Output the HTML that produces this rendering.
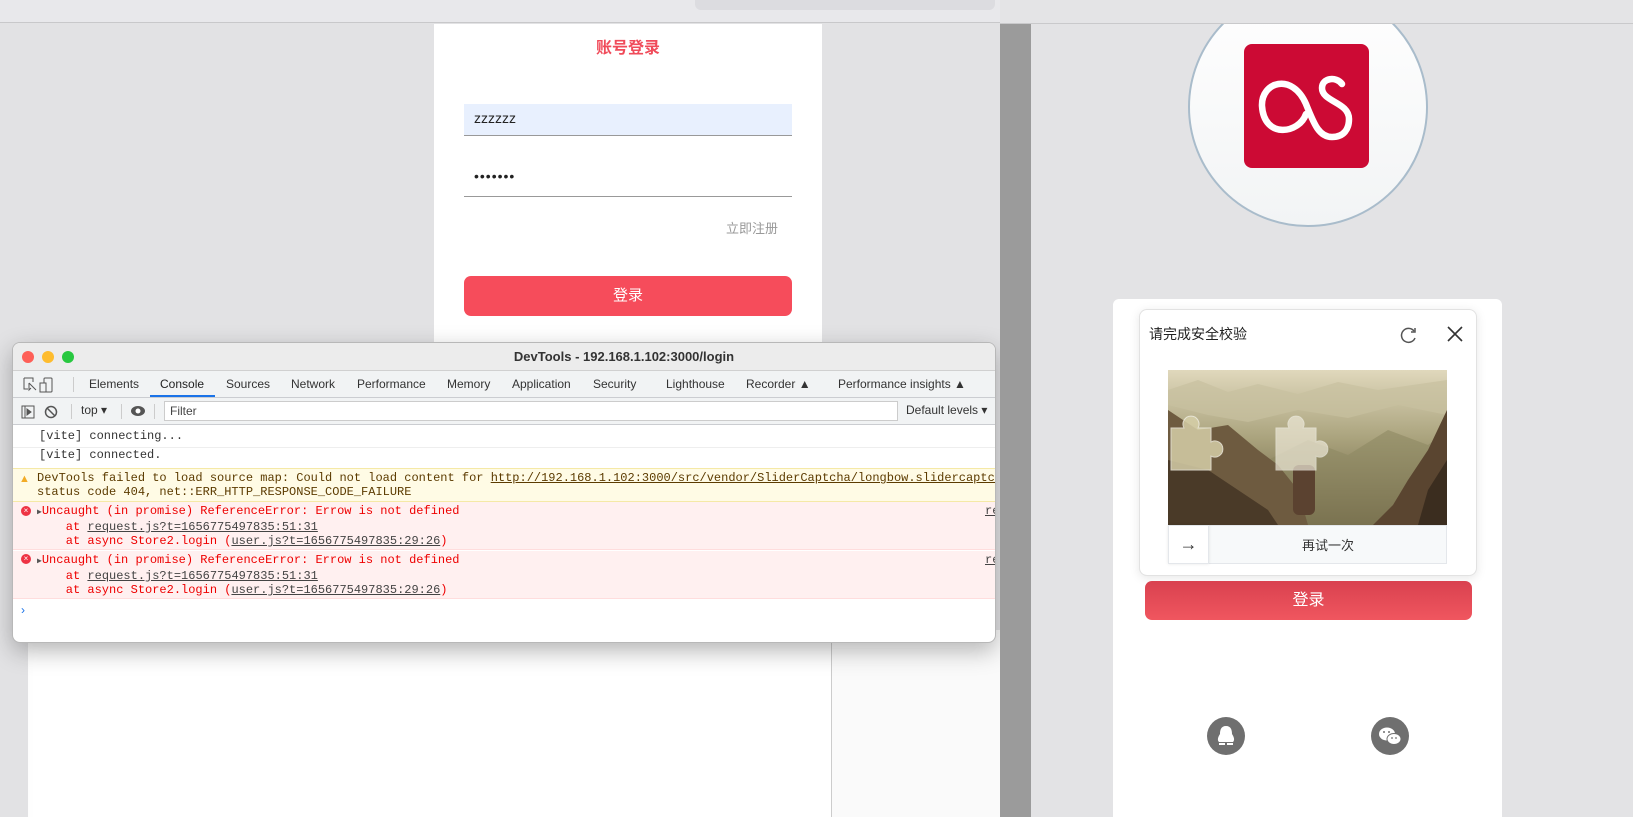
<!DOCTYPE html>
<html><head><meta charset="utf-8">
<style>
*{margin:0;padding:0;box-sizing:border-box}
body{width:1633px;height:817px;overflow:hidden;position:relative;background:#e3e3e5;font-family:"Liberation Sans","Noto Sans CJK SC",sans-serif}
.a{position:absolute}
.mono{font-family:"Liberation Mono","DejaVu Sans Mono",monospace;font-size:12px;white-space:pre}
.u{text-decoration:underline}
</style></head><body>
<!-- left app -->
<div class="a" style="left:0;top:0;width:1000px;height:817px;background:#e2e2e4"></div>
<div class="a" style="left:0;top:0;width:1000px;height:23px;background:#e8e8eb;border-bottom:1px solid #c8c8ca"></div>
<div class="a" style="left:695px;top:0;width:300px;height:10px;background:#dcdce0;border-radius:0 0 6px 6px"></div>
<div class="a" style="left:434px;top:24px;width:388px;height:320px;background:#fff"></div>
<div class="a" style="left:434px;top:34px;width:388px;text-align:center;color:#f04b5a;font-size:16px;font-weight:bold">账号登录</div>
<div class="a" style="left:464px;top:104px;width:328px;height:32px;background:#e8f0fe;border-bottom:1px solid #999;padding:6px 10px;font-size:14px;color:#222">zzzzzz</div>
<div class="a" style="left:464px;top:160px;width:328px;height:37px;border-bottom:1px solid #999;padding:8px 10px;font-size:14px;color:#222;letter-spacing:1px">•••••••</div>
<div class="a" style="left:726px;top:218px;font-size:13px;color:#999">立即注册</div>
<div class="a" style="left:464px;top:276px;width:328px;height:40px;background:#f64c5b;border-radius:7px;color:#fff;font-size:15px;text-align:center;line-height:40px">登录</div>
<!-- page below devtools -->
<div class="a" style="left:28px;top:630px;width:972px;height:187px;background:#fff;box-shadow:inset 0 20px 20px -10px rgba(0,0,0,.06)"></div>
<div class="a" style="left:831px;top:630px;width:1px;height:187px;background:#ccc"></div>
<div class="a" style="left:832px;top:630px;width:168px;height:187px;background:#fafafa"></div>
<!-- devtools -->
<div class="a" style="left:12px;top:342px;width:984px;height:301px;background:#fff;border:1px solid #b8b8b8;border-radius:8px;box-shadow:0 8px 24px rgba(0,0,0,.28);overflow:hidden">
 <div class="a" style="left:0;top:0;width:984px;height:28px;background:#ececec;border-bottom:1px solid #d0d0d0"></div>
 <div class="a" style="left:9px;top:8px;width:12px;height:12px;border-radius:50%;background:#fe5f57"></div>
 <div class="a" style="left:29px;top:8px;width:12px;height:12px;border-radius:50%;background:#febc2e"></div>
 <div class="a" style="left:49px;top:8px;width:12px;height:12px;border-radius:50%;background:#28c840"></div>
 <div class="a" style="left:0;top:6px;width:1222px;text-align:center;font-size:13px;font-weight:bold;color:#333">DevTools - 192.168.1.102:3000/login</div>
 <div class="a" style="left:0;top:28px;width:984px;height:27px;background:#f1f3f4;border-bottom:1px solid #cbcdd1;font-size:12px;color:#333">
  <svg class="a" style="left:9px;top:6px" width="34" height="16"><path d="M2 1h9v4M2 1v11h4M7 6l7 7M7 6v7l2-2" stroke="#555" fill="none"/><rect x="22" y="1" width="8" height="14" rx="1" stroke="#555" fill="none"/><rect x="18" y="6" width="6" height="9" stroke="#555" fill="#f1f3f4"/></svg>
  <div class="a" style="left:60px;top:6px;width:1px;height:15px;background:#ccc"></div>
  <span class="a" style="left:76px;top:6px">Elements</span>
  <span class="a" style="left:147px;top:6px;color:#222">Console</span>
  <div class="a" style="left:137px;top:24px;width:65px;height:2px;background:#1a73e8"></div>
  <span class="a" style="left:213px;top:6px">Sources</span>
  <span class="a" style="left:278px;top:6px">Network</span>
  <span class="a" style="left:344px;top:6px">Performance</span>
  <span class="a" style="left:434px;top:6px">Memory</span>
  <span class="a" style="left:499px;top:6px">Application</span>
  <span class="a" style="left:580px;top:6px">Security</span>
  <span class="a" style="left:653px;top:6px">Lighthouse</span>
  <span class="a" style="left:733px;top:6px">Recorder ▲</span>
  <span class="a" style="left:825px;top:6px;white-space:nowrap">Performance insights ▲</span>
 </div>
 <div class="a" style="left:0;top:55px;width:984px;height:27px;background:#f1f3f4;border-bottom:1px solid #cbcdd1;font-size:12px;color:#333">
  <svg class="a" style="left:8px;top:6px" width="70" height="16"><rect x="1" y="2" width="12" height="12" stroke="#555" fill="none"/><path d="M4 2v12M6 5l4 3-4 3z" stroke="#555" fill="#555"/><circle cx="30" cy="8" r="5.5" stroke="#555" fill="none" stroke-width="1.5"/><path d="M26 4l8 8" stroke="#555" stroke-width="1.5"/></svg>
  <div class="a" style="left:58px;top:6px;width:1px;height:15px;background:#ccc"></div>
  <span class="a" style="left:68px;top:5px">top ▾</span>
  <div class="a" style="left:108px;top:6px;width:1px;height:15px;background:#ccc"></div>
  <svg class="a" style="left:117px;top:6px" width="16" height="14"><ellipse cx="8" cy="7" rx="7" ry="5" fill="#555"/><circle cx="8" cy="7" r="2.5" fill="#fff"/></svg>
  <div class="a" style="left:141px;top:6px;width:1px;height:15px;background:#ccc"></div>
  <div class="a" style="left:151px;top:3px;width:734px;height:20px;background:#fff;border:1px solid #ccc;padding:2px 5px;color:#444">Filter</div>
  <span class="a" style="left:893px;top:5px;white-space:nowrap">Default levels ▾</span>
 </div>
 <div class="a mono" style="left:26px;top:86px;color:#333">[vite] connecting...</div>
 <div class="a" style="left:0;top:104px;width:984px;height:1px;background:#eee"></div>
 <div class="a mono" style="left:26px;top:105px;color:#333">[vite] connected.</div>
 <div class="a" style="left:0;top:125px;width:984px;height:34px;background:#fffbe5;border-top:1px solid #f5e9a6;border-bottom:1px solid #f5e9a6"></div>
 <div class="a" style="left:6px;top:130px;color:#f2ab26;font-size:11px">▲</div>
 <div class="a mono" style="left:24px;top:128px;color:#5c3b00;line-height:14px">DevTools failed to load source map: Could not load content for <span class="u">http://192.168.1.102:3000/src/vendor/SliderCaptcha/longbow.slidercaptcha.js.map</span>
status code 404, net::ERR_HTTP_RESPONSE_CODE_FAILURE</div>
 <div class="a" style="left:0;top:159px;width:984px;height:48px;background:#fff0f0;border-bottom:1px solid #fdd"></div>
 <div class="a" style="left:0;top:208px;width:984px;height:48px;background:#fff0f0;border-bottom:1px solid #fdd"></div>
 <div class="a" style="left:8px;top:163px;width:10px;height:10px;border-radius:50%;background:#e34;color:#fff;font-size:8px;line-height:10px;text-align:center">×</div>
 <div class="a" style="left:8px;top:211px;width:10px;height:10px;border-radius:50%;background:#e34;color:#fff;font-size:8px;line-height:10px;text-align:center">×</div>
 <div class="a mono" style="left:24px;top:161px;color:#e00;line-height:14px"><span style="color:#555;font-size:8px">▶</span>Uncaught (in promise) ReferenceError: Errow is not defined
    at <span class="u" style="color:#444">request.js?t=1656775497835:51:31</span>
    at async Store2.login (<span class="u" style="color:#444">user.js?t=1656775497835:29:26</span>)</div>
 <div class="a mono" style="left:24px;top:210px;color:#e00;line-height:14px"><span style="color:#555;font-size:8px">▶</span>Uncaught (in promise) ReferenceError: Errow is not defined
    at <span class="u" style="color:#444">request.js?t=1656775497835:51:31</span>
    at async Store2.login (<span class="u" style="color:#444">user.js?t=1656775497835:29:26</span>)</div>
 <div class="a mono u" style="left:972px;top:161px;color:#444">re</div>
 <div class="a mono u" style="left:972px;top:210px;color:#444">re</div>
 <div class="a" style="left:8px;top:260px;color:#1a73e8;font-size:12px">›</div>
</div>
<!-- right side -->
<div class="a" style="left:1000px;top:0;width:31px;height:817px;background:#9b9b9b"></div>
<div class="a" style="left:1000px;top:0;width:633px;height:24px;background:#e4e4e6;border-bottom:1px solid #c9c9cb"></div>
<div class="a" style="left:1188px;top:-13px;width:240px;height:240px;border-radius:50%;background:linear-gradient(#fff,#f2f4f5);border:2px solid #a9bccb;clip-path:inset(37px 0 0 0)"></div>
<div class="a" style="left:1244px;top:44px;width:125px;height:124px;background:#cc0a34;border-radius:8px"></div>
<svg class="a" style="left:1244px;top:44px" width="125" height="124"><path d="M62 70C55 90 20 95 18 62C17 38 48 28 62 60C70 80 75 93 88 93C100 93 105 85 105 75C105 58 78 58 78 44C78 34 92 32 98 40" stroke="#fff" stroke-width="6.5" fill="none" stroke-linecap="round"/></svg>
<div class="a" style="left:1113px;top:299px;width:389px;height:518px;background:#fff;border-radius:6px 6px 0 0"></div>
<div class="a" style="left:1139px;top:309px;width:338px;height:267px;background:#fff;border:1px solid #e2e2e2;border-radius:8px;box-shadow:0 2px 10px rgba(0,0,0,.1)"></div>
<div class="a" style="left:1149px;top:324px;font-size:14px;color:#222">请完成安全校验</div>
<svg class="a" style="left:1400px;top:326px" width="18" height="18"><path d="M14 5A7 7 0 1 0 15 12" stroke="#555" stroke-width="1.5" fill="none"/><path d="M15 2v4h-4" stroke="#555" stroke-width="1.5" fill="none"/></svg>
<svg class="a" style="left:1447px;top:326px" width="16" height="16"><path d="M1 1l14 14M15 1L1 15" stroke="#333" stroke-width="1.6"/></svg>
<svg class="a" style="left:1168px;top:370px" width="279" height="155">
 <defs><linearGradient id="sky" x1="0" y1="0" x2="0" y2="1"><stop offset="0" stop-color="#e0d8bc"/><stop offset=".45" stop-color="#a9a27c"/><stop offset="1" stop-color="#5e5236"/></linearGradient></defs>
 <rect width="279" height="155" fill="url(#sky)"/>
 <path d="M0 20L30 10 60 22 90 14 130 24 170 12 210 20 279 10V45L230 35 180 48 130 40 80 52 40 45 0 35Z" fill="#c8c19f" opacity=".7"/>
 <path d="M60 155L100 90 140 70 180 85 220 60 260 75 279 60V155Z" fill="#8d8862" opacity=".6"/>
 <path d="M0 40L30 60 60 55 90 80 110 95 130 120 140 155H0Z" fill="#6e5b40"/>
 <path d="M0 90L40 100 70 120 100 140 110 155H0Z" fill="#4a3a28"/>
 <path d="M279 40L260 80 240 110 225 135 205 155H279Z" fill="#5a4530"/>
 <path d="M279 90L260 120 250 155H279Z" fill="#3b2d1f"/>
 <rect x="125" y="95" width="22" height="50" fill="#5b4230" rx="6"/>
 <path d="M3 58h13a8 8 0 1 1 14 0h13v14a8 8 0 1 1 0 14v14H3Z" fill="#d6cfa8" opacity=".85" stroke="#f0ede0"/>
 <path d="M108 58h13a8 8 0 1 1 14 0h13v14a8 8 0 1 1 0 14v14H108Z" fill="#eee9d8" opacity=".7" stroke="#f5f3ea"/>
</svg>
<div class="a" style="left:1168px;top:525px;width:279px;height:39px;background:#f7f9fa;border:1px solid #e4e7eb"></div>
<div class="a" style="left:1168px;top:525px;width:41px;height:39px;background:#fff;border:1px solid #e4e7eb;box-shadow:0 0 3px rgba(0,0,0,.1);text-align:center;line-height:37px;font-size:18px;color:#333">→</div>
<div class="a" style="left:1209px;top:535px;width:238px;text-align:center;font-size:13px;color:#333">再试一次</div>
<div class="a" style="left:1145px;top:581px;width:327px;height:39px;background:linear-gradient(#d9414f,#f0565f);border-radius:7px;color:#fff;font-size:16px;text-align:center;line-height:39px">登录</div>
<div class="a" style="left:1207px;top:717px;width:38px;height:38px;border-radius:50%;background:#6f6f6f"></div>
<svg class="a" style="left:1207px;top:717px" width="38" height="38"><path d="M19 9c-5 0-6 4-6 8-2 3-3 6-1 8h14c2-2 1-5-1-8 0-4-1-8-6-8z" fill="#fff"/><path d="M12 26h6v2h-6zM20 26h6v2h-6z" fill="#fff"/></svg>
<div class="a" style="left:1371px;top:717px;width:38px;height:38px;border-radius:50%;background:#6f6f6f"></div>
<svg class="a" style="left:1371px;top:717px" width="38" height="38"><ellipse cx="16" cy="17" rx="8" ry="6.5" fill="#fff"/><ellipse cx="23" cy="22" rx="7" ry="5.5" fill="#fff" stroke="#6f6f6f"/><circle cx="13" cy="15" r="1" fill="#6f6f6f"/><circle cx="18" cy="15" r="1" fill="#6f6f6f"/><circle cx="21" cy="21" r=".9" fill="#6f6f6f"/><circle cx="25" cy="21" r=".9" fill="#6f6f6f"/></svg>
</body></html>
